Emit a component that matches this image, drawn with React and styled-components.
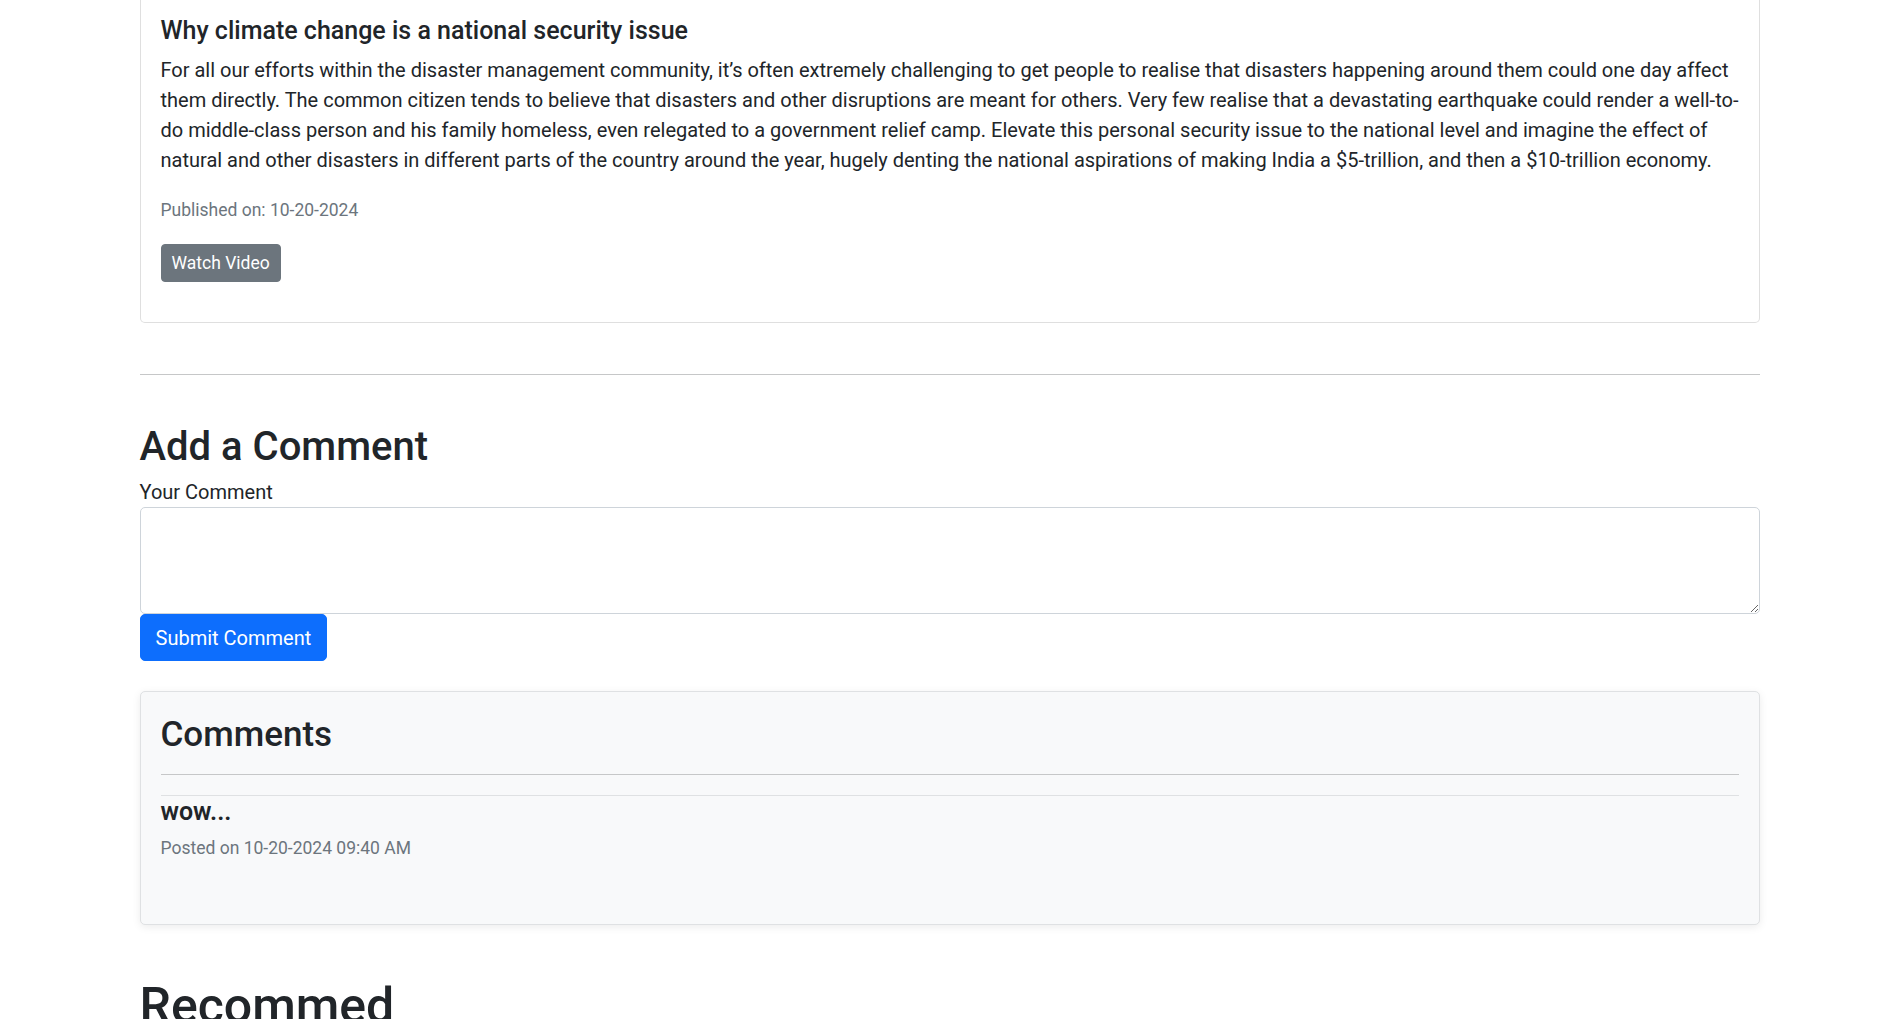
import React from 'react';
import styled, { createGlobalStyle } from 'styled-components';

const GlobalStyle = createGlobalStyle`
  html {
    font-size: 20px;
  }
  body {
    margin: 0;
    background: #fff;
    color: #212529;
    font-family: Roboto, "Noto Sans", "Liberation Sans", sans-serif;
    font-size: 1rem;
    line-height: 1.5;
  }
  * {
    box-sizing: border-box;
  }
`;

const Container = styled.div`
  max-width: 1650px;
  margin: 0 auto;
  padding: 0 15px;
`;

const Card = styled.div`
  background: ${(p) => (p.light ? '#f8f9fa' : '#fff')};
  border: 1px solid ${(p) => (p.light ? '#dfe1e3' : 'rgba(0, 0, 0, 0.125)')};
  border-radius: 5px;
  box-shadow: ${(p) => (p.light ? '0 2px 9px rgba(0, 0, 0, 0.08)' : 'none')};
  margin-top: ${(p) => p.top || 0}px;
`;

const CardBody = styled.div`
  padding: ${(p) => p.pt || 20}px 20px ${(p) => p.pb || 20}px;
`;

const CardTitle = styled.h5`
  margin: 0 0 9px;
  font-size: 1.25rem;
  font-weight: 500;
  line-height: 1.2;
`;

const CardText = styled.p`
  margin: 0 0 19px;
`;

const Meta = styled.p`
  margin: 0 0 ${(p) => p.mb ?? 20}px;
`;

const Muted = styled.small`
  font-size: 0.875em;
  color: #6c757d;
`;

const Button = styled.button`
  display: inline-block;
  font-family: inherit;
  font-weight: 400;
  color: #fff;
  background: ${(p) => (p.variant === 'secondary' ? '#6c757d' : '#0d6efd')};
  border: 1px solid ${(p) => (p.variant === 'secondary' ? '#6c757d' : '#0d6efd')};
  padding: ${(p) => (p.small ? '5px 10px' : '7.5px 15px')};
  font-size: ${(p) => (p.small ? '17.5px' : '20px')};
  line-height: 1.5;
  border-radius: ${(p) => (p.small ? '4px' : '5px')};
  cursor: pointer;
`;

const Rule = styled.hr`
  margin: ${(p) => p.top ?? 20}px 0 20px;
  border: 0;
  border-top: 1px solid #c6c7c8;
`;

const Heading = styled.h2`
  margin: ${(p) => p.top || 0}px 0 ${(p) => p.bottom ?? 10}px;
  font-size: ${(p) => p.size}px;
  font-weight: 500;
  line-height: 1.2;
`;

const Label = styled.label`
  display: block;
`;

const TextArea = styled.textarea`
  display: block;
  width: 100%;
  height: 107px;
  padding: 7.5px 15px;
  font-family: inherit;
  font-size: 1rem;
  line-height: 1.5;
  color: #212529;
  background: #fff;
  border: 1px solid #ced4da;
  border-radius: 5px;
  resize: vertical;
`;

const CommentItem = styled.div`
  border-top: 1px solid #dfe1e3;
  padding: 1px 0 42px;
`;

const CommentText = styled.h5`
  margin: 0 0 5px;
  font-size: 1.25rem;
  font-weight: 600;
  line-height: 1.2;
`;

const comments = [{ text: 'wow...', posted: '10-20-2024 09:40 AM' }];

export default function App() {
  return (
    <>
      <GlobalStyle />
      <Container>
        <Card top={-5}>
          <CardBody pb={40}>
            <CardTitle>Why climate change is a national security issue</CardTitle>
            <CardText>
              For all our efforts within the disaster management community, it’s often extremely
              challenging to get people to realise that disasters happening around them could one day
              affect them directly. The common citizen tends to believe that disasters and other
              disruptions are meant for others. Very few realise that a devastating earthquake could
              render a well-to-do middle-class person and his family homeless, even relegated to a
              government relief camp. Elevate this personal security issue to the national level and
              imagine the effect of natural and other disasters in different parts of the country
              around the year, hugely denting the national aspirations of making India a
              $5-trillion, and then a $10-trillion economy.
            </CardText>
            <Meta>
              <Muted>Published on: 10-20-2024</Muted>
            </Meta>
            <Button variant="secondary" small>
              Watch Video
            </Button>
          </CardBody>
        </Card>

        <Rule top={51} />

        <section>
          <Heading size={40} top={48} bottom={6}>
            Add a Comment
          </Heading>
          <Label htmlFor="comment">Your Comment</Label>
          <TextArea id="comment" rows={3} />
          <Button>Submit Comment</Button>
        </section>

        <Card light top={30}>
          <CardBody pt={22}>
            <Heading as="h3" size={35} bottom={0}>
              Comments
            </Heading>
            <Rule top={18} />
            {comments.map((c) => (
              <CommentItem key={c.posted}>
                <CommentText>{c.text}</CommentText>
                <Meta mb={0}>
                  <Muted>Posted on {c.posted}</Muted>
                </Meta>
              </CommentItem>
            ))}
          </CardBody>
        </Card>

        <Heading as="h1" size={50} top={51}>
          Recommed
        </Heading>
      </Container>
    </>
  );
}
